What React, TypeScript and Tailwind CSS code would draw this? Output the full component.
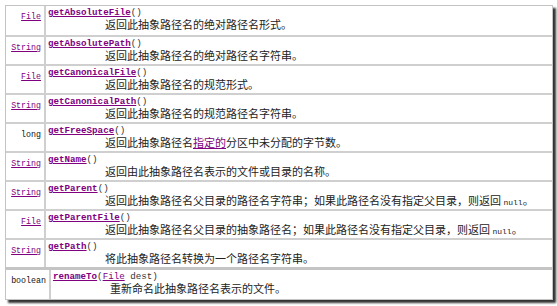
import type { ReactNode } from "react";

const MONO = "font-['Liberation_Mono','DejaVu_Sans_Mono',monospace]";
const CJK = "font-['Noto_Sans_CJK_SC','Noto_Sans',sans-serif]";

type Row = { type: string; link?: boolean; name: string; desc: ReactNode };

const Null = () => <code className={`${MONO} text-[8px] text-[#222]`}>null</code>;

const ROWS: Row[] = [
  { type: "File", link: true, name: "getAbsoluteFile", desc: "返回此抽象路径名的绝对路径名形式。" },
  { type: "String", link: true, name: "getAbsolutePath", desc: "返回此抽象路径名的绝对路径名字符串。" },
  { type: "File", link: true, name: "getCanonicalFile", desc: "返回此抽象路径名的规范形式。" },
  { type: "String", link: true, name: "getCanonicalPath", desc: "返回此抽象路径名的规范路径名字符串。" },
  {
    type: "long",
    name: "getFreeSpace",
    desc: (
      <>
        返回此抽象路径名<span className="text-[#800080] underline">指定的</span>分区中未分配的字节数。
      </>
    ),
  },
  { type: "String", link: true, name: "getName", desc: "返回由此抽象路径名表示的文件或目录的名称。" },
  {
    type: "String",
    link: true,
    name: "getParent",
    desc: (
      <>
        返回此抽象路径名父目录的路径名字符串；如果此路径名没有指定父目录，则返回 <Null />。
      </>
    ),
  },
  {
    type: "File",
    link: true,
    name: "getParentFile",
    desc: (
      <>
        返回此抽象路径名父目录的抽象路径名；如果此路径名没有指定父目录，则返回 <Null />。
      </>
    ),
  },
  { type: "String", link: true, name: "getPath", desc: "将此抽象路径名转换为一个路径名字符串。" },
];

function TypeCell({ type, link, width }: { type: string; link?: boolean; width: string }) {
  return (
    <div className={`${width} shrink-0 border-r-2 border-[#cfcfcf] pr-[3px] pt-[2px] text-right leading-[11px]`}>
      <code className={`${MONO} text-[8.3px] ${link ? "text-[#800080] underline" : "text-[#111]"}`}>{type}</code>
    </div>
  );
}

function MethodLine({ children }: { children: ReactNode }) {
  return <div className={`${MONO} text-[9.2px] leading-[10px] text-[#333]`}>{children}</div>;
}

function Desc({ children }: { children: ReactNode }) {
  return (
    <div className={`${CJK} pl-[57px] text-[11px] leading-[13px] text-[#222] whitespace-nowrap`}>{children}</div>
  );
}

export default function App() {
  return (
    <div className="w-[557px] h-[306px] bg-white pl-[5px] pt-[5px]">
      <div className="w-[548px] bg-white shadow-[3px_3px_2px_rgba(0,0,0,0.8)]">
        <div className="border border-[#c4c4c4]">
          {ROWS.map((r, i) => (
            <div key={i} className={`flex h-[29px] ${i > 0 ? "border-t-2 border-[#cfcfcf]" : ""}`}>
              <TypeCell type={r.type} link={r.link} width="w-[40px]" />
              <div className="pl-[2px] pt-[2px]">
                <MethodLine>
                  <b className="text-[#800080] underline">{r.name}</b>()
                </MethodLine>
                <Desc>{r.desc}</Desc>
              </div>
            </div>
          ))}
        </div>
        <div className="border border-t-2 border-[#c4c4c4]">
          <div className="flex h-[29px]">
            <TypeCell type="boolean" width="w-[45px]" />
            <div className="pl-[2px] pt-[2px]">
              <MethodLine>
                <b className="text-[#800080] underline">renameTo</b>(
                <span className="text-[#800080] underline">File</span> dest)
              </MethodLine>
              <Desc>重新命名此抽象路径名表示的文件。</Desc>
            </div>
          </div>
        </div>
      </div>
    </div>
  );
}
